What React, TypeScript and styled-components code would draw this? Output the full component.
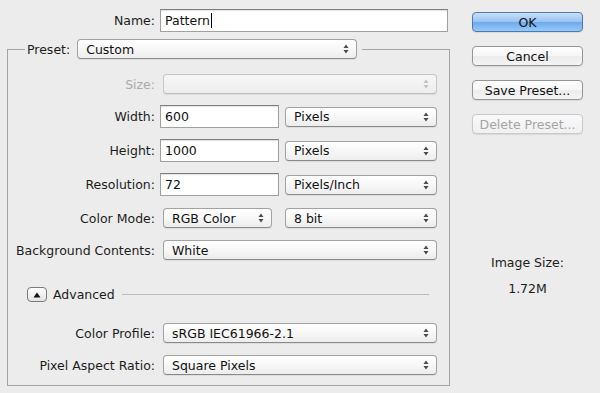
import React from 'react'
import styled, { createGlobalStyle } from 'styled-components'

const GlobalStyle = createGlobalStyle`
  html, body {
    margin: 0;
    padding: 0;
    background: #ececec;
  }
  body {
    font-family: 'DejaVu Sans', 'Liberation Sans', sans-serif;
    font-size: 12.5px;
    color: #1c1c1c;
  }
`

const Arrows = () => (
  <svg width="6" height="10" viewBox="0 0 6 10">
    <path d="M3 0.5 L5.5 4 L0.5 4 Z" fill="currentColor" />
    <path d="M3 9.5 L5.5 6 L0.5 6 Z" fill="currentColor" />
  </svg>
)

type PopupProps = {
  value?: string
  width: number
  inset?: number
  disabled?: boolean
}

const Popup = ({ value, width, inset = 3, disabled }: PopupProps) => (
  <SelectBox $width={width} $inset={inset} $disabled={disabled}>
    <SelectValue>{value}</SelectValue>
    <ArrowSlot $disabled={disabled}>
      <Arrows />
    </ArrowSlot>
  </SelectBox>
)

const App = () => {
  return (
    <>
      <GlobalStyle />
      <Dialog>
        <Main>
          <NameRow>
            <Label $width={160}>Name:</Label>
            <TextField $width={288}>
              Pattern
              <Caret />
            </TextField>
          </NameRow>

          <Group>
            <Legend>
              <LegendLabel>Preset:</LegendLabel>
              <Popup value="Custom" width={280} inset={0} />
            </Legend>

            <FieldRow $gap={15} $height={20}>
              <Label $disabled>Size:</Label>
              <Popup width={274} disabled />
            </FieldRow>

            <FieldRow $gap={11} $height={23}>
              <Label>Width:</Label>
              <TextField $width={119}>600</TextField>
              <Popup value="Pixels" width={152} inset={6} />
            </FieldRow>

            <FieldRow $gap={11} $height={23}>
              <Label>Height:</Label>
              <TextField $width={119}>1000</TextField>
              <Popup value="Pixels" width={152} inset={6} />
            </FieldRow>

            <FieldRow $gap={11} $height={23}>
              <Label>Resolution:</Label>
              <TextField $width={119}>72</TextField>
              <Popup value="Pixels/Inch" width={152} inset={6} />
            </FieldRow>

            <FieldRow $gap={12} $height={20}>
              <Label>Color Mode:</Label>
              <Popup value="RGB Color" width={109} />
              <Popup value="8 bit" width={152} inset={13} />
            </FieldRow>

            <FieldRow $gap={12} $height={20}>
              <Label>Background Contents:</Label>
              <Popup value="White" width={274} />
            </FieldRow>

            <AdvancedRow>
              <Disclosure>
                <svg width="8" height="6" viewBox="0 0 8 6">
                  <path d="M4 0.5 L7.5 5.5 L0.5 5.5 Z" fill="#111" />
                </svg>
              </Disclosure>
              <span>Advanced</span>
              <Rule />
            </AdvancedRow>

            <FieldRow $gap={21} $height={20}>
              <Label>Color Profile:</Label>
              <Popup value="sRGB IEC61966-2.1" width={274} />
            </FieldRow>

            <FieldRow $gap={12} $height={20}>
              <Label>Pixel Aspect Ratio:</Label>
              <Popup value="Square Pixels" width={274} />
            </FieldRow>
          </Group>
        </Main>

        <Side>
          <Button $variant="primary">OK</Button>
          <Button>Cancel</Button>
          <Button>Save Preset...</Button>
          <Button $variant="disabled">Delete Preset...</Button>
          <ImageSize>
            <span>Image Size:</span>
            <span>1.72M</span>
          </ImageSize>
        </Side>
      </Dialog>
    </>
  )
}

export default App

const Dialog = styled.div`
  display: flex;
  width: 600px;
  height: 393px;
  box-sizing: border-box;
`

const Main = styled.div`
  width: 472px;
  padding-top: 9px;
  display: flex;
  flex-direction: column;
`

const NameRow = styled.div`
  display: flex;
  align-items: center;
  height: 23px;
`

const Label = styled.span<{ $width?: number; $disabled?: boolean }>`
  width: ${(p) => p.$width ?? 152}px;
  flex: none;
  text-align: right;
  padding-right: 5px;
  box-sizing: border-box;
  white-space: nowrap;
  color: ${(p) => (p.$disabled ? '#a9a9a9' : '#1c1c1c')};
`

const TextField = styled.div<{ $width: number }>`
  width: ${(p) => p.$width}px;
  height: 23px;
  box-sizing: border-box;
  flex: none;
  display: flex;
  align-items: center;
  padding-left: 4px;
  background: #fff;
  border: 1px solid #a0a0a0;
  border-top-color: #7d7d7d;
  box-shadow: inset 0 1px 1px rgba(0, 0, 0, 0.12);
  color: #111;
`

const Caret = styled.span`
  display: inline-block;
  width: 1px;
  height: 15px;
  background: #000;
  margin-left: 1px;
`

const Group = styled.fieldset`
  margin: 7px 0 0 7px;
  padding: 0 0 10px 0;
  width: 443px;
  box-sizing: border-box;
  border: 1px solid #a4a4a4;
  min-width: 0;
`

const Legend = styled.legend`
  display: flex;
  align-items: center;
  margin-left: 17px;
  padding: 0 5px 0 2px;
  height: 20px;
`

const LegendLabel = styled.span`
  margin-right: 7px;
`

const FieldRow = styled.div<{ $gap: number; $height: number }>`
  display: flex;
  align-items: center;
  margin-top: ${(p) => p.$gap}px;
  height: ${(p) => p.$height}px;
`

const SelectBox = styled.div<{ $width: number; $inset: number; $disabled?: boolean }>`
  width: ${(p) => p.$width}px;
  height: 20px;
  box-sizing: border-box;
  flex: none;
  margin-left: ${(p) => p.$inset}px;
  display: flex;
  align-items: center;
  border-radius: 4px;
  border: 1px solid ${(p) => (p.$disabled ? '#c6c6c6' : '#a2a2a2')};
  border-bottom-color: ${(p) => (p.$disabled ? '#bdbdbd' : '#8a8a8a')};
  background: ${(p) =>
    p.$disabled
      ? 'linear-gradient(#f6f6f6, #ededed)'
      : 'linear-gradient(#ffffff, #f7f7f7 50%, #ededed)'};
  box-shadow: 0 1px 1px rgba(0, 0, 0, 0.07);
`

const SelectValue = styled.span`
  flex: 1;
  padding-left: 8px;
  white-space: nowrap;
  color: #111;
`

const ArrowSlot = styled.span<{ $disabled?: boolean }>`
  display: flex;
  padding-right: 7px;
  color: ${(p) => (p.$disabled ? '#c0c0c0' : '#4a4a4a')};
`

const AdvancedRow = styled.div`
  display: flex;
  align-items: center;
  margin-top: 27px;
  height: 15px;
  padding-left: 19px;
`

const Disclosure = styled.div`
  width: 20px;
  height: 15px;
  box-sizing: border-box;
  margin-right: 6px;
  display: flex;
  align-items: center;
  justify-content: center;
  border: 1px solid #7a7a7a;
  border-radius: 4px;
  background: linear-gradient(#fdfdfd, #e4e4e4);
`

const Rule = styled.div`
  flex: 1;
  height: 1px;
  margin: 0 20px 0 7px;
  background: #bdbdbd;
`

const Side = styled.div`
  width: 111px;
  padding-top: 12px;
  display: flex;
  flex-direction: column;
  gap: 14px;
`

const Button = styled.div<{ $variant?: 'primary' | 'disabled' }>`
  height: 20px;
  box-sizing: border-box;
  display: flex;
  align-items: center;
  justify-content: center;
  border-radius: 4px;
  white-space: nowrap;
  border: 1px solid
    ${(p) =>
      p.$variant === 'primary'
        ? '#5278ad'
        : p.$variant === 'disabled'
          ? '#c9c9c9'
          : '#959595'};
  color: ${(p) => (p.$variant === 'disabled' ? '#a4a4a4' : '#111')};
  background: ${(p) =>
    p.$variant === 'primary'
      ? 'linear-gradient(#c8dff8, #98c2f1 50%, #6ea9ec 51%, #93cbfa)'
      : p.$variant === 'disabled'
        ? 'linear-gradient(#f9f9f9, #f0f0f0)'
        : 'linear-gradient(#ffffff, #f5f5f5 50%, #ececec 51%, #f4f4f4)'};
  box-shadow: 0 1px 1px rgba(0, 0, 0, 0.08);
`

const ImageSize = styled.div`
  margin-top: 107px;
  display: flex;
  flex-direction: column;
  align-items: center;
  gap: 11px;
`
